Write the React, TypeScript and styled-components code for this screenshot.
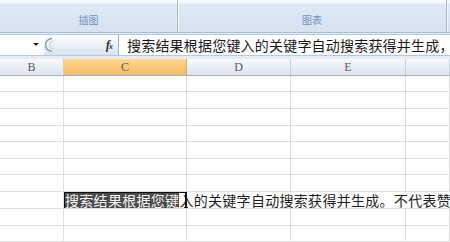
import React from 'react';
import styled, { createGlobalStyle } from 'styled-components';

const GlobalStyle = createGlobalStyle`
  html, body {
    margin: 0;
    padding: 0;
    background: #fff;
  }
  body {
    width: 450px;
    height: 242px;
    overflow: hidden;
    font-family: "Noto Sans CJK SC", "Liberation Sans", sans-serif;
  }
`;

const Window = styled.div`
  display: flex;
  flex-direction: column;
  width: 450px;
  height: 242px;
  overflow: hidden;
  background: #fff;
`;

const Ribbon = styled.div`
  display: flex;
  height: 34px;
  box-sizing: border-box;
  background: linear-gradient(#f5f8fc 0, #f5f8fc 3px, #e0e9f5 4px, #d6e2f1 100%);
  border-bottom: 1px solid #a9bdd6;
`;

const Group = styled.div<{ w: number }>`
  width: ${({ w }) => w}px;
  flex: none;
  display: flex;
  align-items: flex-end;
  justify-content: center;
  padding-bottom: 6px;
  box-sizing: border-box;
  border-right: 1px solid #a6bbd5;
  box-shadow: 1px 0 0 #f2f6fb;
  font-size: 10px;
  line-height: 12px;
  color: #7293c2;
`;

const FormulaArea = styled.div`
  background: #e4ecf6;
  padding: 1px 0 3px;
`;

const FormulaBar = styled.div`
  display: flex;
  height: 22px;
  box-sizing: border-box;
  border-top: 1px solid #b7c8dc;
  border-bottom: 1px solid #b7c8dc;
  background: #fff;
`;

const NameBox = styled.div`
  width: 44px;
  flex: none;
  display: flex;
  align-items: center;
  justify-content: flex-end;
  padding-right: 5px;
  box-sizing: border-box;
  background: #fff;
`;

const DropArrow = styled.span`
  width: 0;
  height: 0;
  border-left: 3px solid transparent;
  border-right: 3px solid transparent;
  border-top: 3px solid #222;
`;

const Tools = styled.div`
  width: 75px;
  flex: none;
  display: flex;
  align-items: center;
  justify-content: space-between;
  padding: 0 6px 0 1px;
  box-sizing: border-box;
  background: linear-gradient(#ffffff, #e9eff7 55%, #d9e3f0);
  border-right: 1px solid #9fb4cc;
`;

const Fx = styled.span`
  font-family: "Liberation Serif", serif;
  font-style: italic;
  font-weight: bold;
  font-size: 13px;
  color: #3a3a3a;
  letter-spacing: -1px;

  small {
    font-size: 8px;
  }
`;

const FormulaText = styled.div`
  flex: 1;
  padding-left: 8px;
  font-size: 14px;
  line-height: 20px;
  letter-spacing: 0.2px;
  color: #1a1a1a;
  white-space: nowrap;
  overflow: hidden;
`;

const HeaderRow = styled.div`
  display: flex;
  height: 17px;
  box-sizing: border-box;
  border-bottom: 1px solid #9fb3c9;
`;

const HeaderCell = styled.div<{ w?: number; selected?: boolean }>`
  width: ${({ w }) => (w ? `${w}px` : 'auto')};
  flex: ${({ w }) => (w ? 'none' : '1')};
  box-sizing: border-box;
  border-right: 1px solid ${({ selected }) => (selected ? '#e8a94e' : '#c6d2e0')};
  background: ${({ selected }) =>
    selected
      ? 'linear-gradient(#fcd795, #f8c677 50%, #f6bd66)'
      : 'linear-gradient(#f7f9fc, #e9eef5 50%, #dfe6ef)'};
  font-family: "Liberation Serif", serif;
  font-size: 12px;
  line-height: 16px;
  text-align: center;
  color: #5a5a5a;
`;

const Row = styled.div<{ h: number }>`
  display: flex;
  height: ${({ h }) => h}px;
  box-sizing: border-box;
  border-bottom: 1px solid #dcdee0;
`;

const Cell = styled.div<{ w?: number }>`
  width: ${({ w }) => (w ? `${w}px` : 'auto')};
  flex: ${({ w }) => (w ? 'none' : '1')};
  box-sizing: border-box;
  border-right: 1px solid #dcdee0;
`;

const Spill = styled.div`
  position: relative;
  flex: 1;
  font-size: 14px;
  line-height: 17px;
  letter-spacing: 0.3px;
  padding-left: 1px;
  color: #1e1e1e;
  white-space: nowrap;
  overflow: hidden;
`;

const Selected = styled.span`
  background: #4a4a4a;
  color: #f4f4f4;
`;

const ActiveBox = styled.div`
  position: absolute;
  left: -1px;
  top: -1px;
  width: 124px;
  height: 19px;
  box-sizing: border-box;
  border: 2px solid #111;

  &::after {
    content: '';
    position: absolute;
    right: -3px;
    bottom: -3px;
    width: 4px;
    height: 4px;
    background: #111;
  }
`;

const columns = [
  { key: 'B', w: 64 },
  { key: 'C', w: 123, selected: true },
  { key: 'D', w: 104 },
  { key: 'E', w: 115 },
  { key: '', w: 0 },
];

const rowHeights = [17, 18, 17, 17, 17, 17, 18, 17, 17, 17];
const textRow = 7;

const CancelIcon = () => (
  <svg width="12" height="16" viewBox="0 0 12 16">
    <path d="M7 1.5 A6.5 6.5 0 0 0 7 14.5" fill="none" stroke="#8a9bb0" strokeWidth="1.4" />
    <path d="M8.5 4 A4 4 0 0 0 8.5 12" fill="none" stroke="#c2ccd8" strokeWidth="1" />
  </svg>
);

const App: React.FC = () => {
  return (
    <Window>
      <GlobalStyle />
      <Ribbon>
        <Group w={178}>插图</Group>
        <Group w={269}>图表</Group>
      </Ribbon>
      <FormulaArea>
        <FormulaBar>
          <NameBox>
            <DropArrow />
          </NameBox>
          <Tools>
            <CancelIcon />
            <Fx>
              f<small>x</small>
            </Fx>
          </Tools>
          <FormulaText>搜索结果根据您键入的关键字自动搜索获得并生成，</FormulaText>
        </FormulaBar>
      </FormulaArea>
      <HeaderRow>
        {columns.map(c => (
          <HeaderCell key={c.key || 'rest'} w={c.w || undefined} selected={c.selected}>
            {c.key}
          </HeaderCell>
        ))}
      </HeaderRow>
      {rowHeights.map((h, i) =>
        i === textRow ? (
          <Row key={i} h={h}>
            <Cell w={64} />
            <Spill>
              <Selected>搜索结果根据您键</Selected>入的关键字自动搜索获得并生成。不代表赞
              <ActiveBox />
            </Spill>
          </Row>
        ) : (
          <Row key={i} h={h}>
            {columns.map(c => (
              <Cell key={c.key || 'rest'} w={c.w || undefined} />
            ))}
          </Row>
        )
      )}
    </Window>
  );
};

export default App;
